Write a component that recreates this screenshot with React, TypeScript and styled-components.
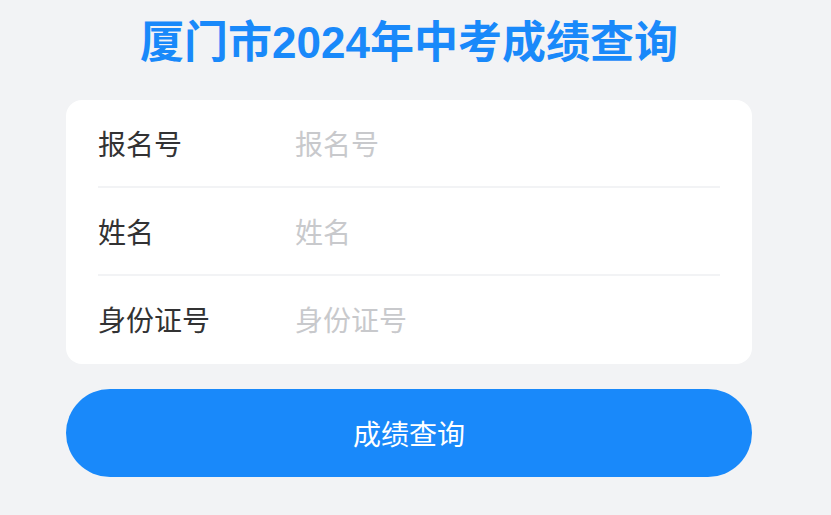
import styled, { createGlobalStyle } from 'styled-components'

const GlobalStyle = createGlobalStyle`
  html, body {
    margin: 0;
    padding: 0;
    background: #f2f3f5;
    font-family: "Liberation Sans", "Noto Sans CJK SC", sans-serif;
  }
  input::placeholder {
    color: #c8c9cc;
  }
`

const StyledPage = styled.div`
  width: 818px;
  min-height: 515px;
  padding-top: 13px;
  box-sizing: border-box;
  display: flex;
  flex-direction: column;
  align-items: center;
`
const StyledTitle = styled.h1`
  margin: 0 0 27px;
  font-size: 44px;
  line-height: 60px;
  font-weight: 700;
  color: #1989fa;
`
const StyledCard = styled.div`
  width: 686px;
  background: #fff;
  border-radius: 16px;
  overflow: hidden;
`
const StyledRow = styled.label<{ $last?: boolean }>`
  position: relative;
  display: flex;
  align-items: center;
  height: 88px;
  padding: 3px 32px 0;
  box-sizing: border-box;
  &::after {
    content: '';
    display: ${({ $last }) => ($last ? 'none' : 'block')};
    position: absolute;
    left: 32px;
    right: 32px;
    bottom: 0;
    height: 2px;
    background: #f2f3f5;
  }
`
const StyledLabel = styled.span`
  width: 173px;
  margin-right: 24px;
  flex-shrink: 0;
  font-size: 28px;
  line-height: 40px;
  height: 40px;
  color: #323233;
`
const StyledInput = styled.input`
  flex: 1;
  height: 40px;
  border: 0;
  outline: none;
  padding: 0;
  font-family: inherit;
  font-size: 28px;
  line-height: 40px;
  color: #323233;
  background: transparent;
`
const StyledButton = styled.button`
  margin-top: 25px;
  width: 686px;
  height: 88px;
  border: 0;
  border-radius: 44px;
  background: #1989fa;
  color: #fff;
  font-family: inherit;
  font-size: 28px;
  cursor: pointer;
`

const fields = [
  { name: 'examNo', label: '报名号' },
  { name: 'name', label: '姓名' },
  { name: 'idCard', label: '身份证号' },
]

export default function App() {
  return (
    <>
      <GlobalStyle />
      <StyledPage>
        <StyledTitle>厦门市2024年中考成绩查询</StyledTitle>
        <StyledCard>
          {fields.map((field, idx) => (
            <StyledRow key={field.name} $last={idx === fields.length - 1}>
              <StyledLabel>{field.label}</StyledLabel>
              <StyledInput name={field.name} placeholder={field.label} />
            </StyledRow>
          ))}
        </StyledCard>
        <StyledButton>成绩查询</StyledButton>
      </StyledPage>
    </>
  )
}
